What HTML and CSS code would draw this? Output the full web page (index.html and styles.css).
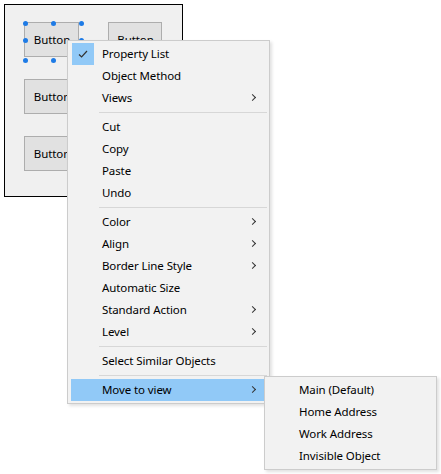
FILE: index.html
```html
<!DOCTYPE html>
<html>
<head>
<meta charset="utf-8">
<link rel="stylesheet" href="styles.css">
</head>
<body>
<div class="stage">
  <div class="form">
    <div class="btn b1">Button</div>
    <div class="btn b2">Button</div>
    <div class="btn b3">Button</div>
    <div class="btn b4">Button</div>
    <span class="h" style="left:18px;top:16px"></span>
    <span class="h" style="left:46px;top:16px"></span>
    <span class="h" style="left:74px;top:16px"></span>
    <span class="h" style="left:18px;top:33px"></span>
    <span class="h" style="left:74px;top:33px"></span>
    <span class="h" style="left:18px;top:53px"></span>
    <span class="h" style="left:46px;top:53px"></span>
  </div>

  <div class="menu main">
    <div class="item checked">
      <span class="chk"><svg width="22" height="22" viewBox="0 0 22 22"><path d="M7 11.5 L9.6 14 L15 8" fill="none" stroke="#333" stroke-width="1.2"/></svg></span>
      <span class="lbl">Property List</span>
    </div>
    <div class="item"><span class="lbl">Object Method</span></div>
    <div class="item"><span class="lbl">Views</span><span class="arr"></span></div>
    <div class="sep"></div>
    <div class="item"><span class="lbl">Cut</span></div>
    <div class="item"><span class="lbl">Copy</span></div>
    <div class="item"><span class="lbl">Paste</span></div>
    <div class="item"><span class="lbl">Undo</span></div>
    <div class="sep"></div>
    <div class="item"><span class="lbl">Color</span><span class="arr"></span></div>
    <div class="item"><span class="lbl">Align</span><span class="arr"></span></div>
    <div class="item"><span class="lbl">Border Line Style</span><span class="arr"></span></div>
    <div class="item"><span class="lbl">Automatic Size</span></div>
    <div class="item"><span class="lbl">Standard Action</span><span class="arr"></span></div>
    <div class="item"><span class="lbl">Level</span><span class="arr"></span></div>
    <div class="sep"></div>
    <div class="item"><span class="lbl">Select Similar Objects</span></div>
    <div class="sep"></div>
    <div class="item hot"><span class="lbl">Move to view</span><span class="arr"></span></div>
  </div>

  <div class="menu sub">
    <div class="item"><span class="lbl">Main (Default)</span></div>
    <div class="item"><span class="lbl">Home Address</span></div>
    <div class="item"><span class="lbl">Work Address</span></div>
    <div class="item"><span class="lbl">Invisible Object</span></div>
  </div>
</div>
</body>
</html>
```

FILE: styles.css
```css
html, body {
  margin: 0;
  padding: 0;
  background: #ffffff;
}
body {
  font-family: "Noto Sans", "Liberation Sans", sans-serif;
  font-size: 11.5px;
  letter-spacing: -0.1px;
  color: #000;
}
.stage {
  position: relative;
  width: 441px;
  height: 474px;
}
.form {
  position: absolute;
  left: 4px;
  top: 4px;
  width: 177px;
  height: 191px;
  border: 1px solid #000;
  background: #f0f0f0;
}
.btn {
  position: absolute;
  box-sizing: border-box;
  height: 35px;
  width: 55px;
  border: 1px solid #adadad;
  background: #e1e1e1;
  display: flex;
  align-items: center;
  justify-content: center;
  padding-bottom: 1px;
  padding-left: 1px;
}
.b1 { left: 19px; top: 17px; }
.b2 { left: 103px; top: 17px; width: 54px; }
.b3 { left: 19px; top: 74px; }
.b4 { left: 19px; top: 131px; }
.h {
  position: absolute;
  width: 5px;
  height: 5px;
  border-radius: 50%;
  background: #1e7be6;
}
.menu {
  position: absolute;
  box-sizing: border-box;
  background: #f2f2f2;
  border: 1px solid #cccccc;
  padding: 2px;
  box-shadow: 2px 2px 3px rgba(0,0,0,0.12);
}
.main {
  left: 67px;
  top: 40px;
  width: 203px;
}
.sub {
  left: 264px;
  top: 376px;
  width: 173px;
}
.item {
  position: relative;
  box-sizing: border-box;
  height: 22px;
  display: flex;
  align-items: center;
  padding-left: 31px;
  padding-bottom: 1px;
  margin-left: 1px;
}
.sub .item { padding-left: 31px; }
.chk {
  position: absolute;
  left: 1px;
  top: 0;
  width: 22px;
  height: 22px;
  background: #91c9f7;
}
.chk svg { display: block; }
.lbl { white-space: nowrap; }
.hot { background: #91c9f7; }
.arr {
  position: absolute;
  right: 12px;
  top: 8px;
  width: 4px;
  height: 4px;
  border-right: 1px solid #333;
  border-top: 1px solid #333;
  transform: rotate(45deg);
}
.sep {
  height: 1px;
  margin: 3px 0 3px 29px;
  background: #d7d7d7;
}
```
